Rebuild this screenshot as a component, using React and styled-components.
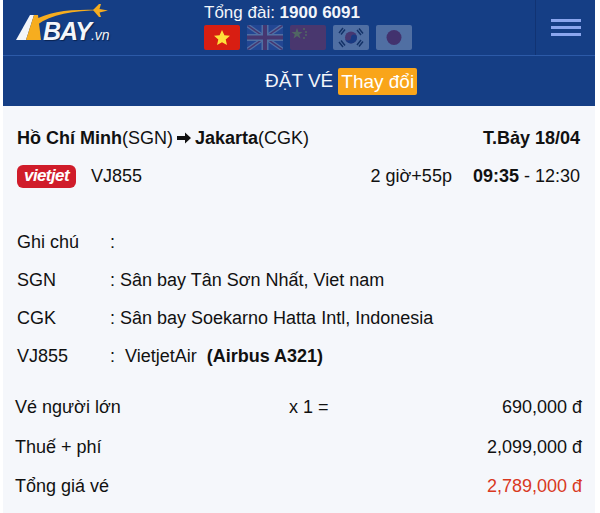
import React from 'react'
import styled, { createGlobalStyle } from 'styled-components'

const GlobalStyle = createGlobalStyle`
  html, body {
    margin: 0;
    padding: 0;
    background: #fff;
    font-family: "Liberation Sans", Arial, sans-serif;
    color: #111;
  }
`

const Page = styled.div`
  width: 592px;
  height: 513px;
  margin-left: 3px;
  overflow: hidden;
  background: #f5f7fb;
`

const TopBar = styled.div`
  display: flex;
  height: 55px;
  background: #153e85;
  border-bottom: 1px solid #2c5aa8;
`

const LogoBox = styled.div`
  position: relative;
  width: 130px;
  flex: none;
`

const LogoArt = styled.svg`
  position: absolute;
  left: 10px;
  top: 2px;
`

const LogoText = styled.span`
  position: absolute;
  left: 40px;
  top: 18px;
  font-size: 25px;
  line-height: 26px;
  font-weight: 700;
  font-style: italic;
  letter-spacing: -1px;
  color: #f4f6fa;
  text-shadow: 1px 1px 1px #0a2350;
`

const LogoDomain = styled.span`
  font-size: 14px;
  letter-spacing: 0;
  font-weight: 400;
`

const Hotline = styled.div`
  width: 402px;
  flex: none;
  padding-top: 3px;
  padding-left: 71px;
  box-sizing: border-box;
`

const HotlineText = styled.div`
  font-size: 17px;
  line-height: 19px;
  color: #f2f5fa;
  white-space: nowrap;
`

const Flags = styled.div`
  display: flex;
  gap: 7px;
  margin-top: 3px;
`

const Flag = styled.div`
  width: 36px;
  height: 25px;
  border-radius: 2px;
  overflow: hidden;
  opacity: ${props => (props.$active ? 1 : 0.25)};
  svg {
    display: block;
  }
`

const MenuBox = styled.div`
  flex: 1;
  display: flex;
  flex-direction: column;
  align-items: center;
  justify-content: center;
  gap: 4px;
  padding-bottom: 1px;
  border-left: 1px solid #113373;
`

const MenuLine = styled.span`
  width: 30px;
  height: 3px;
  background: #8ba6ee;
`

const TitleBar = styled.div`
  display: flex;
  align-items: center;
  gap: 5px;
  height: 50px;
  padding-left: 262px;
  background: #153e85;
  color: #f2f5fa;
  font-size: 19px;
`

const ChangeButton = styled.span`
  display: block;
  padding: 0 3px;
  height: 27px;
  line-height: 27px;
  background: #f9a51a;
  border-radius: 2px;
  color: #fff;
`

const Content = styled.div`
  font-size: 18px;
`

const FlightRow = styled.div`
  display: flex;
  justify-content: space-between;
  align-items: center;
  height: 38px;
  padding: 0 15px 0 14px;
  margin-top: ${props => props.$top || 0}px;
`

const Route = styled.div`
  display: flex;
  align-items: center;
  white-space: pre;
`

const Arrow = styled.svg`
  margin: 0 4px 0 4px;
`

const Airline = styled.div`
  display: flex;
  align-items: center;
  gap: 15px;
`

const AirlineBadge = styled.span`
  display: block;
  width: 59px;
  height: 23px;
  line-height: 22px;
  text-align: center;
  border-radius: 6px;
  background: #d01c2a;
  color: #fff;
  font-size: 17px;
  font-weight: 700;
  font-style: italic;
  letter-spacing: -0.6px;
`

const Times = styled.div`
  display: flex;
  gap: 21px;
  white-space: pre;
`

const Notes = styled.div`
  margin-top: 28px;
`

const NoteRow = styled.div`
  display: flex;
  align-items: center;
  height: 38px;
  padding-left: 14px;
  white-space: pre;
`

const NoteLabel = styled.span`
  width: 93px;
  flex: none;
`

const Prices = styled.div`
  margin-top: 13px;
`

const PriceRow = styled.div`
  display: grid;
  grid-template-columns: 274px 1fr auto;
  align-items: center;
  height: 39.5px;
  padding: 0 13px 0 12px;
`

const Amount = styled.span`
  color: ${props => props.$color || 'inherit'};
`

const VietnamFlag = () =>
  <svg width="36" height="25" viewBox="0 0 36 25">
    <rect width="36" height="25" fill="#d81e12" />
    <polygon fill="#ffe03a" points="18,5 20.4,10.3 26,10.8 21.7,14.5 23,20 18,17.2 13,20 14.3,14.5 10,10.8 15.6,10.3" />
  </svg>

const UkFlag = () =>
  <svg width="36" height="25" viewBox="0 0 36 25">
    <rect width="36" height="25" fill="#4a5fc0" />
    <path d="M0 0L36 25M36 0L0 25" stroke="#fff" strokeWidth="4" />
    <path d="M0 0L36 25M36 0L0 25" stroke="#d8263a" strokeWidth="1.5" />
    <path d="M18 0V25M0 12.5H36" stroke="#fff" strokeWidth="7" />
    <path d="M18 0V25M0 12.5H36" stroke="#d8263a" strokeWidth="4" />
  </svg>

const ChinaFlag = () =>
  <svg width="36" height="25" viewBox="0 0 36 25">
    <rect width="36" height="25" fill="#e5232b" />
    <polygon fill="#ffde00" points="7,3 8.4,7 12.5,7 9.2,9.5 10.5,13.5 7,11 3.5,13.5 4.8,9.5 1.5,7 5.6,7" />
    <circle cx="14" cy="4" r="1" fill="#ffde00" />
    <circle cx="16" cy="7" r="1" fill="#ffde00" />
    <circle cx="16" cy="10" r="1" fill="#ffde00" />
    <circle cx="14" cy="13" r="1" fill="#ffde00" />
  </svg>

const KoreaFlag = () =>
  <svg width="36" height="25" viewBox="0 0 36 25">
    <rect width="36" height="25" fill="#fff" />
    <circle cx="18" cy="12.5" r="6" fill="#d8263a" />
    <path d="M12 12.5a6 6 0 0 0 12 0a3 3 0 0 0-6 0a3 3 0 0 1-6 0z" fill="#24307c" />
    <path d="M6 8L10 3M8 9.500L12 4.500M26 3.500L30 8.500M24 5L28 10M6 17L10 22M8 15.500L12 20.500M26 21.500L30 16.500M24 20L28 15" stroke="#111" strokeWidth="1.5" />
  </svg>

const JapanFlag = () =>
  <svg width="36" height="25" viewBox="0 0 36 25">
    <rect width="36" height="25" fill="#fff" />
    <circle cx="18" cy="12.5" r="7.500" fill="#c8102e" />
  </svg>

const App = () =>
  <Page>
    <GlobalStyle />
    <TopBar>
      <LogoBox>
        <LogoArt width="100" height="42" viewBox="0 0 100 42">
          <polygon points="3,38 17,13 21,13 13,38" fill="#f4f6fa" />
          <polygon points="13,38 21,13 25,13 28,38" fill="#f6ad1f" />
          <path d="M20 19C36 9 58 7 88 8C60 9 38 12 24 23Z" fill="#f6ad1f" />
          <path d="M80 8L86 2L88 2L86.500 7L95 8.500L86.500 10.500L88 15L86 15Z" fill="#f6ad1f" />
        </LogoArt>
        <LogoText>BAY<LogoDomain>.vn</LogoDomain></LogoText>
      </LogoBox>
      <Hotline>
        <HotlineText>Tổng đài: <b>1900 6091</b></HotlineText>
        <Flags>
          <Flag $active><VietnamFlag /></Flag>
          <Flag><UkFlag /></Flag>
          <Flag><ChinaFlag /></Flag>
          <Flag><KoreaFlag /></Flag>
          <Flag><JapanFlag /></Flag>
        </Flags>
      </Hotline>
      <MenuBox>
        <MenuLine />
        <MenuLine />
        <MenuLine />
      </MenuBox>
    </TopBar>
    <TitleBar>
      <span>ĐẶT VÉ</span>
      <ChangeButton>Thay đổi</ChangeButton>
    </TitleBar>
    <Content>
      <FlightRow $top={13}>
        <Route>
          <b>Hồ Chí Minh</b>(SGN)
          <Arrow width="14" height="12" viewBox="0 0 14 12">
            <path d="M0 4H8V0.500L14 6L8 11.500V8H0Z" fill="#111" />
          </Arrow>
          <b>Jakarta</b>(CGK)
        </Route>
        <b>T.Bảy 18/04</b>
      </FlightRow>
      <FlightRow>
        <Airline>
          <AirlineBadge>vietjet</AirlineBadge>
          <span>VJ855</span>
        </Airline>
        <Times>
          <span>2 giờ+55p</span>
          <span><b>09:35</b> - 12:30</span>
        </Times>
      </FlightRow>
      <Notes>
        <NoteRow><NoteLabel>Ghi chú</NoteLabel>:</NoteRow>
        <NoteRow><NoteLabel>SGN</NoteLabel>: Sân bay Tân Sơn Nhất, Viet nam</NoteRow>
        <NoteRow><NoteLabel>CGK</NoteLabel>: Sân bay Soekarno Hatta Intl, Indonesia</NoteRow>
        <NoteRow><NoteLabel>VJ855</NoteLabel>:  VietjetAir  <b>(Airbus A321)</b></NoteRow>
      </Notes>
      <Prices>
        <PriceRow><span>Vé người lớn</span><span>x 1 =</span><Amount>690,000 đ</Amount></PriceRow>
        <PriceRow><span>Thuế + phí</span><span /><Amount>2,099,000 đ</Amount></PriceRow>
        <PriceRow><span>Tổng giá vé</span><span /><Amount $color="#d9391f">2,789,000 đ</Amount></PriceRow>
      </Prices>
    </Content>
  </Page>

export default App
